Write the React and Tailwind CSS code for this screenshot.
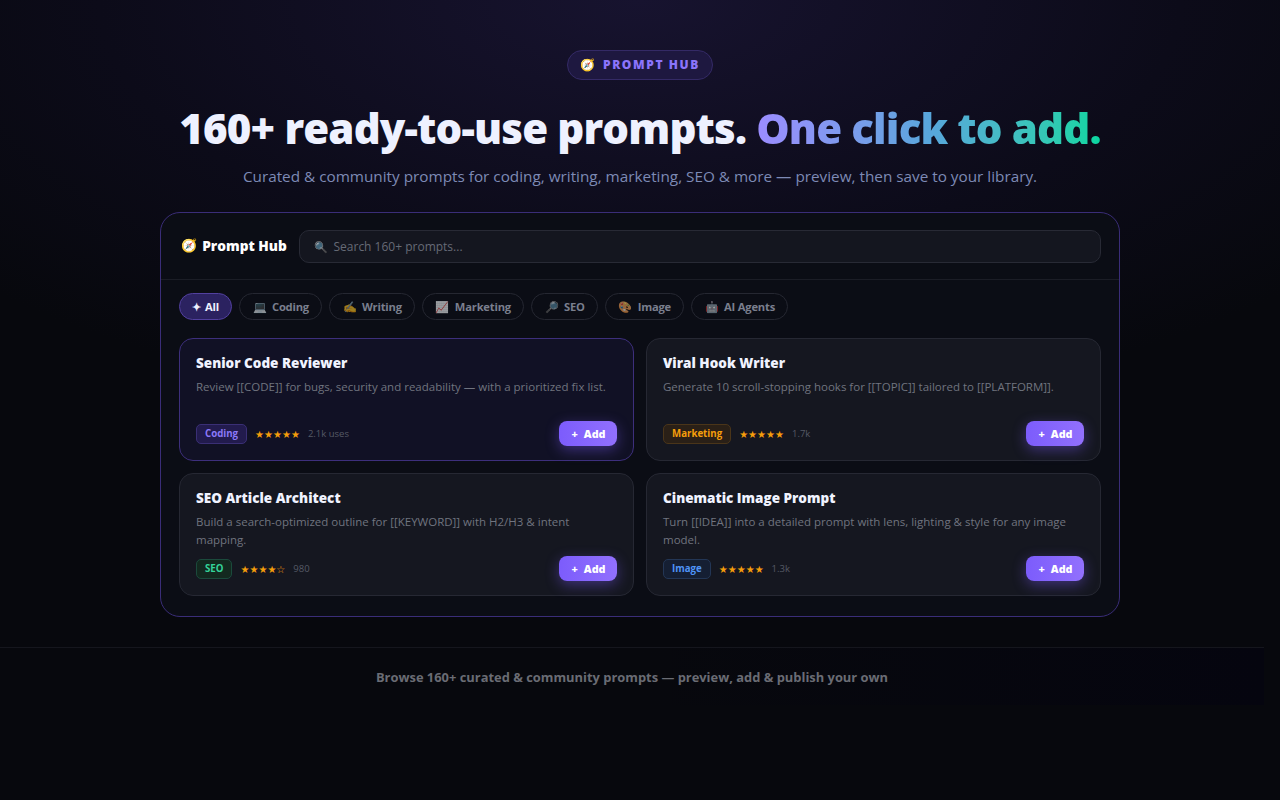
import React from "react";

const font = { fontFamily: '"Open Sans", "Noto Sans", "Noto Color Emoji", sans-serif' };

const chips = [
  { icon: "✦", label: "All", active: true },
  { icon: "💻", label: "Coding" },
  { icon: "✍️", label: "Writing" },
  { icon: "📈", label: "Marketing" },
  { icon: "🔎", label: "SEO" },
  { icon: "🎨", label: "Image" },
  { icon: "🤖", label: "AI Agents" },
];

const cards = [
  {
    title: "Senior Code Reviewer",
    desc: "Review [[CODE]] for bugs, security and readability — with a prioritized fix list.",
    tag: "Coding",
    tagClass: "bg-[#221b4d] border-[#3a2f75] text-[#8b78f8]",
    stars: "★★★★★",
    uses: "2.1k uses",
    active: true,
  },
  {
    title: "Viral Hook Writer",
    desc: "Generate 10 scroll-stopping hooks for [[TOPIC]] tailored to [[PLATFORM]].",
    tag: "Marketing",
    tagClass: "bg-[#2a2017] border-[#4a3519] text-[#f59e0b]",
    stars: "★★★★★",
    uses: "1.7k",
  },
  {
    title: "SEO Article Architect",
    desc: "Build a search-optimized outline for [[KEYWORD]] with H2/H3 & intent mapping.",
    tag: "SEO",
    tagClass: "bg-[#13291f] border-[#1b4a3c] text-[#34d399]",
    stars: "★★★★☆",
    uses: "980",
  },
  {
    title: "Cinematic Image Prompt",
    desc: "Turn [[IDEA]] into a detailed prompt with lens, lighting & style for any image model.",
    tag: "Image",
    tagClass: "bg-[#151f33] border-[#233655] text-[#4f94f7]",
    stars: "★★★★★",
    uses: "1.3k",
  },
];

function PromptCard({ card }) {
  return (
    <div
      className={`h-[123px] rounded-[14px] border px-4 pt-[14px] pb-[14px] flex flex-col ${
        card.active
          ? "bg-[#111125] border-[#3d2f7c]"
          : "bg-[#151720] border-[#262833]"
      }`}
    >
      <h3 className="text-[13.5px] leading-[20px] font-extrabold text-[#f0f3ff]">
        {card.title}
      </h3>
      <p className="mt-[5px] text-[11.5px] leading-[18px] text-[#70747f]">{card.desc}</p>
      <div className="mt-auto flex items-center">
        <span
          className={`h-5 px-[8px] pt-[1px] rounded-[5px] border text-[9.7px] font-bold flex items-center ${card.tagClass}`}
        >
          {card.tag}
        </span>
        <span className="mt-[1px] ml-2 font-['DejaVu_Sans'] text-[10px] text-[#f59e0b]">{card.stars}</span>
        <span className="mt-[1px] ml-2 text-[9.5px] text-[#565a66]">{card.uses}</span>
        <button className="ml-auto -mt-[1px] pt-[1px] pl-[1px] h-[25px] w-[58px] rounded-[8px] bg-gradient-to-r from-[#7c5cfc] to-[#9270fd] text-white text-[10.8px] font-extrabold shadow-[0_4px_14px_rgba(124,92,252,0.4)] flex items-center justify-center gap-[6px]">
          <span>+</span>
          <span>Add</span>
        </button>
      </div>
    </div>
  );
}

export default function App() {
  return (
    <div
      className="min-h-[800px] overflow-hidden bg-[#07080d] bg-[radial-gradient(ellipse_900px_420px_at_50%_0%,#17132f_0%,#0c0b19_60%,#07080d_100%)]"
      style={font}
    >
      <section className="pt-[50px] flex flex-col items-center">
        <div className="h-[30px] w-[146px] rounded-full border border-[#342a66] bg-[#1e1840] flex items-center justify-center gap-2 text-[12px] font-extrabold tracking-[1.6px] text-[#8b74fb]">
          <span className="text-[12px] tracking-normal">🧭</span>
          PROMPT HUB
        </div>
        <h1 className="mt-[18px] text-[42px] leading-[60px] font-extrabold text-[#eef1ff] tracking-[-0.85px] whitespace-nowrap">
          160+ ready-to-use prompts.{" "}
          <span className="bg-gradient-to-r from-[#9b8cff] via-[#58a6dc] to-[#06d6a0] bg-clip-text text-transparent">
            One click to add.
          </span>
        </h1>
        <p className="mt-[6px] text-[15.3px] leading-[24px] text-[#7d8ab5]">
          Curated & community prompts for coding, writing, marketing, SEO & more — preview, then save to your library.
        </p>
      </section>

      <section className="mt-6 mx-[160px] h-[405px] rounded-[20px] border border-[#3a2d78] bg-[#0b0d15] overflow-hidden">
        <div className="h-[67px] pl-5 pr-[18px] border-b border-[#1b1d26] flex items-center">
          <span className="text-[13px]">🧭</span>
          <span className="ml-[5px] pt-[1px] text-[13.7px] font-extrabold text-white whitespace-nowrap">Prompt Hub</span>
          <div className="ml-3 flex-1 h-[33px] rounded-[10px] border border-[#282a35] bg-[#14161f] pl-[15px] pt-[2px] flex items-center gap-[5px] text-[12px] text-[#666a76]">
            <span className="text-[11px] opacity-70">🔍</span>
            Search 160+ prompts...
          </div>
        </div>
        <div className="px-[18px] pt-[13px] flex gap-[7px]">
          {chips.map((chip) => (
            <div
              key={chip.label}
              className={`h-[27px] pt-[1px] rounded-full border flex items-center pr-[12px] text-[11.2px] tracking-[-0.2px] font-bold whitespace-nowrap ${
                chip.active
                  ? "pl-[12px] gap-[2px] border-[#52409f] bg-[#2b2260] text-[#eef0ff]"
                  : "pl-[13px] gap-[5px] border-[#252731] text-[#7a7f8e]"
              }`}
            >
              <span className={chip.active ? "w-[11px]" : "w-[14px] opacity-60"}>{chip.icon}</span>
              {chip.label}
            </div>
          ))}
        </div>
        <div className="mt-[18px] px-[18px] grid grid-cols-2 gap-3">
          {cards.map((card) => (
            <PromptCard key={card.title} card={card} />
          ))}
        </div>
      </section>

      <footer className="mt-[30px] h-[58px] w-[1264px] border-t border-[#15161d] bg-gradient-to-r from-transparent via-transparent to-[#05050f] pt-[20px] text-center text-[12.9px] leading-[18px] font-bold text-[#6a6c74]">
        Browse 160+ curated & community prompts — preview, add & publish your own
      </footer>
    </div>
  );
}
